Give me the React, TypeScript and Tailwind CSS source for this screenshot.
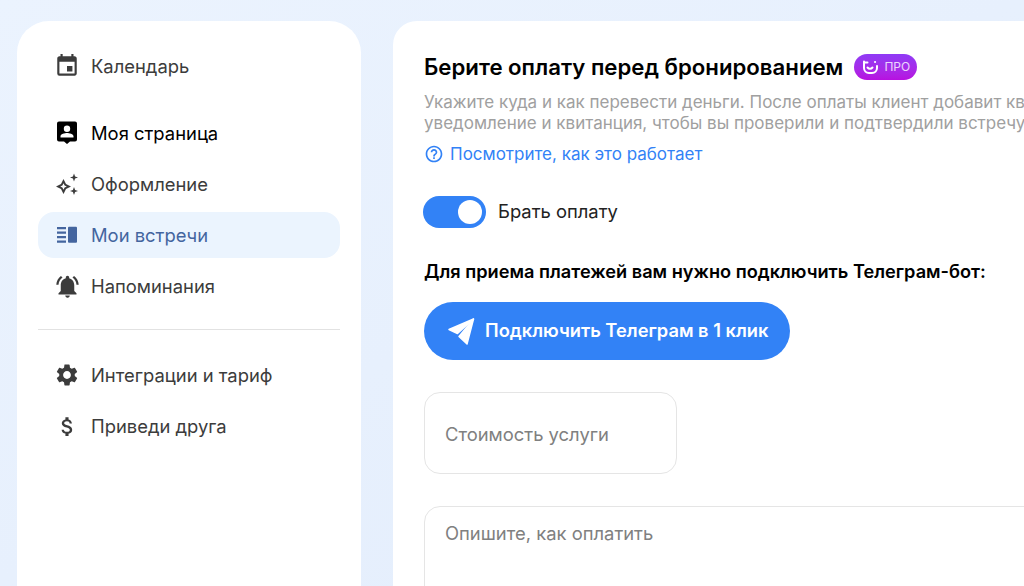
import type { ReactNode } from "react"
import {
    MdAttachMoney,
    MdEvent,
    MdHelpOutline,
    MdNotificationsActive,
    MdSettings,
} from "react-icons/md"

function SparkleIcon() {
    return (
        <svg viewBox="0 0 24 24" className="h-6 w-6" fill="#3c3c3c">
            <path fillRule="evenodd" d="M8.500 7l2.500 5 5 2.500-5 2.500-2.500 5-2.500-5-5-2.500 5-2.500 2.500-5zm0 4.200l-1.100 2.200-2.200 1.100 2.200 1.100 1.100 2.200 1.100-2.200 2.200-1.100-2.200-1.100-1.100-2.200z" />
            <path d="M19 1.500l1.100 2.900 2.900 1.100-2.900 1.100L19 9.500l-1.100-2.900L15 5.500l2.900-1.100L19 1.500z" />
            <path d="M19 15l1.100 2.900 2.900 1.100-2.900 1.100L19 23l-1.100-2.900L15 19l2.900-1.100L19 15z" />
        </svg>
    )
}

function PageIcon() {
    return (
        <svg viewBox="0 0 24 24" className="h-6 w-6" fill="#000">
            <path fillRule="evenodd" d="M4 0.500h16a2 2 0 0 1 2 2v16a2 2 0 0 1-2 2h-5l-3 2.500-3-2.500H4a2 2 0 0 1-2-2v-16a2 2 0 0 1 2-2zM12 4.500a3.200 3.200 0 1 0 0 6.400 3.200 3.200 0 0 0 0-6.400zm-6.500 12h13v-1.200c0-2.200-4.300-3.300-6.500-3.300s-6.500 1.100-6.500 3.300v1.200z" />
        </svg>
    )
}

function MeetingsIcon() {
    return (
        <svg viewBox="0 0 24 24" className="h-6 w-6" fill="#44659f">
            <path d="M2 4h9v2.200H2zM2 8.500h9v2.200H2zM2 13h9v2.200H2zM2 17.500h9v2.200H2z" />
            <rect x="13" y="3.800" width="9" height="16" rx="1" />
        </svg>
    )
}

function TelegramIcon() {
    return (
        <svg viewBox="0 0 28 28" className="h-7 w-7" fill="white" stroke="white" strokeWidth="1.500" strokeLinejoin="round">
            <path d="M2 12.500L26.500 2 10.500 16.500z" />
            <path d="M12 19.500L26.500 2 20 27z" />
        </svg>
    )
}

function NavRow({ icon, label, className = "text-[#3c3c3c]" }: { icon: ReactNode; label: string; className?: string }) {
    return (
        <div className={`flex h-[46px] items-center gap-3 rounded-2xl pl-[17px] text-[18.4px] ${className}`}>
            {icon}
            <span className="pt-[2px]">{label}</span>
        </div>
    )
}

function ProBadge() {
    return (
        <div className="flex h-[26px] w-[63px] items-center justify-center gap-[5px] rounded-full bg-gradient-to-b from-[#8f3af5] to-[#b80fe0] text-[12px] text-white/80">
            <svg viewBox="0 0 18 18" className="h-[18px] w-[18px]" fill="none" stroke="white" strokeWidth="2" strokeLinecap="round">
                <path d="M3 3.500V10a5 5 0 0 0 5 5h3a5 5 0 0 0 5-5V8" />
                <path d="M3 4.500h3.500" />
                <path d="M6.500 9.500c1.400 1.600 3.600 1.600 5 0" />
                <path d="M14 4h.1" />
            </svg>
            <span>ПРО</span>
        </div>
    )
}

export default function App() {
    return (
        <div className="flex h-[586px] w-[1024px] gap-8 overflow-hidden bg-gradient-to-br from-[#ebf3fe] to-[#e3edfc] pl-[17px] pt-[21px] font-['Inter',sans-serif]">
            <aside className="flex h-[640px] w-[344px] shrink-0 flex-col rounded-[32px] bg-white px-[21px] pt-[22px]">
                <NavRow icon={<MdEvent size={26} className="-mx-px" />} label="Календарь" />
                <div className="mt-[21px] flex flex-col gap-[5px]">
                    <NavRow icon={<PageIcon />} label="Моя страница" className="text-black" />
                    <NavRow icon={<SparkleIcon />} label="Оформление" />
                    <NavRow icon={<MeetingsIcon />} label="Мои встречи" className="bg-[#ebf4fe] text-[#44659f]" />
                    <NavRow icon={<MdNotificationsActive size={27} className="-mx-[1.5px]" />} label="Напоминания" />
                </div>
                <div className="mb-[22px] mt-[20px] h-[1px] bg-[#e2e2e2]" />
                <div className="flex flex-col gap-[5px]">
                    <NavRow icon={<MdSettings size={26} className="-mx-px" />} label="Интеграции и тариф" />
                    <NavRow icon={<MdAttachMoney size={25} className="-mx-[0.5px]" />} label="Приведи друга" />
                </div>
            </aside>

            <main className="h-[640px] w-[720px] shrink-0 rounded-[24px] bg-white pl-[31px] pt-[32px]">
                <div className="flex items-center gap-[11px]">
                    <h1 className="text-[22.2px] font-semibold leading-[28px] text-black">Берите оплату перед бронированием</h1>
                    <ProBadge />
                </div>
                <p className="mt-[11px] whitespace-nowrap text-[17px] leading-[20.5px] text-[#a0a0a0]">
                    Укажите куда и как перевести деньги. После оплаты клиент добавит квитанцию,
                    <br />
                    уведомление и квитанция, чтобы вы проверили и подтвердили встречу
                </p>
                <div className="mt-[9px] flex items-center gap-[6px] text-[17px] leading-[24px] text-[#3282f6]">
                    <MdHelpOutline size={20} />
                    <span>Посмотрите, как это работает</span>
                </div>
                <div className="mt-[30px] flex items-center gap-3">
                    <div className="-ml-px flex h-8 w-[63px] items-center justify-end rounded-full bg-[#3282f6] pr-[4px]">
                        <div className="h-6 w-6 rounded-full bg-white" />
                    </div>
                    <span className="text-[18.4px] text-[#222]">Брать оплату</span>
                </div>
                <p className="mt-[32px] text-[18.2px] font-semibold leading-[22px] text-black">
                    Для приема платежей вам нужно подключить Телеграм-бот:
                </p>
                <button className="mt-[20px] flex h-[58px] w-[366px] items-center gap-[10px] rounded-full bg-[#3282f6] pl-[23px] text-[18.3px] font-semibold text-white">
                    <TelegramIcon />
                    <span>Подключить Телеграм в 1 клик</span>
                </button>
                <div className="mt-[32px] flex h-[82px] w-[253px] items-center rounded-2xl border border-[#e5e5e5] pl-[20px] pt-[4px] text-[18.4px] text-[#808080]">
                    Стоимость услуги
                </div>
                <div className="mt-[32px] h-[200px] w-full rounded-2xl border border-[#e5e5e5] pl-[20px] pt-[13px] text-[18.4px] text-[#808080]">
                    Опишите, как оплатить
                </div>
            </main>
        </div>
    )
}
